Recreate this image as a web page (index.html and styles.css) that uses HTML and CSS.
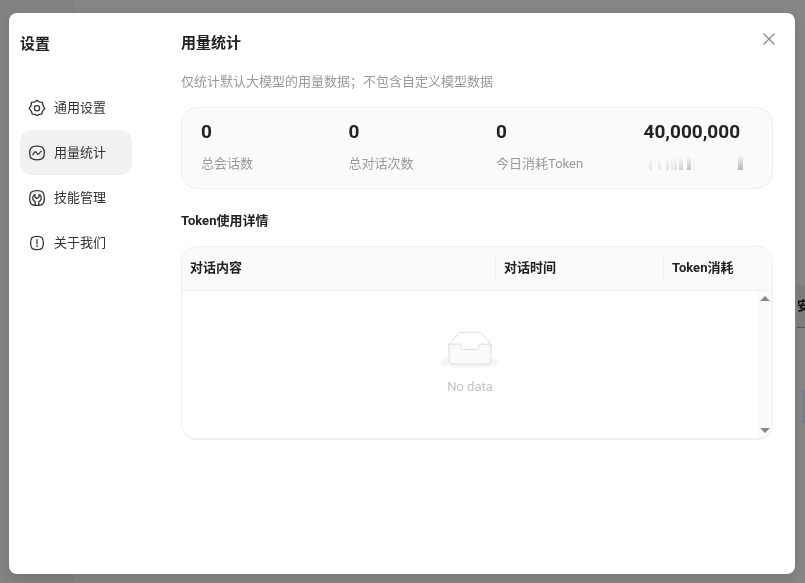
FILE: index.html
```html
<!DOCTYPE html>
<html lang="zh-CN">
<head>
<meta charset="utf-8">
<meta name="viewport" content="width=device-width, initial-scale=1">
<title>设置</title>
<link rel="stylesheet" href="styles.css">
</head>
<body>
<div class="backdrop" aria-hidden="true">
  <span class="backdrop-rail"></span>
  <span class="backdrop-panel">安</span>
  <span class="backdrop-accent"></span>
</div>
<div class="dialog" role="dialog" aria-labelledby="dialog-title">
  <aside class="sidebar">
    <h1 class="dialog-title" id="dialog-title">设置</h1>
    <nav class="menu">
      <a class="menu-item" href="#general">
        <svg class="icon" viewBox="0 0 18 18"><path d="M9 1.2 11.1 2.9 14.5 3.3 15 6.7 16.8 9.6 14.6 12.1 13.7 15.2 10.7 15.4 9 16.7 7.3 15.4 4.3 15.2 3.4 12.1 1.2 9.6 3 6.7 3.5 3.3 6.9 2.9Z"/><circle cx="9" cy="9.2" r="2.6"/></svg>
        通用设置
      </a>
      <a class="menu-item active" href="#usage" aria-current="page">
        <svg class="icon" viewBox="0 0 18 18"><path d="M9 2.2C14.6 2.2 16.3 3.8 16.3 9S14.6 15.8 9 15.8 1.7 14.2 1.7 9 3.4 2.2 9 2.2Z"/><path d="M4.8 10.6 6.6 8.1Q7.3 7.2 8 8.1L9.3 9.9Q10 10.8 10.7 9.9L13.2 7.1"/></svg>
        用量统计
      </a>
      <a class="menu-item" href="#skills">
        <svg class="icon" viewBox="0 0 18 18"><path d="M7.2 16.4C3 16.1 1.7 14.3 1.7 9 1.7 3.3 3.3 1.7 9 1.7S16.3 3.3 16.3 9C16.3 14.3 15 16.1 10.8 16.4"/><path d="M7.2 16.3V12.6C4.9 11.5 4.2 9 5.1 7.2 5.5 6.3 6.2 5.8 7 5.6V8L9 9.4 11 8V5.6C11.8 5.8 12.5 6.3 12.9 7.2 13.8 9 13.1 11.5 10.8 12.6V16.3Z"/></svg>
        技能管理
      </a>
      <a class="menu-item" href="#about">
        <svg class="icon" viewBox="0 0 18 18"><path d="M9 2.4C13.9 2.4 15.4 4 15.4 9S13.9 15.6 9 15.6 2.6 14 2.6 9 4.1 2.4 9 2.4Z"/><path d="M9 5.6V9.8M9 11.4V12.6"/></svg>
        关于我们
      </a>
    </nav>
  </aside>
  <main class="content">
    <header class="content-header">
      <h2 class="content-title">用量统计</h2>
      <button class="close" type="button" aria-label="关闭"><svg class="close-icon" viewBox="0 0 14 14"><path d="M1.5 1.5 12.5 12.5M12.5 1.5 1.5 12.5"/></svg></button>
    </header>
    <p class="hint">仅统计默认大模型的用量数据；不包含自定义模型数据</p>
    <dl class="stats">
      <div class="stat"><dd class="stat-value">0</dd><dt class="stat-label">总会话数</dt></div>
      <div class="stat"><dd class="stat-value">0</dd><dt class="stat-label">总对话次数</dt></div>
      <div class="stat"><dd class="stat-value">0</dd><dt class="stat-label">今日消耗Token</dt></div>
      <div class="stat"><dd class="stat-value">40,000,000</dd><dt class="stat-label">
        <svg class="smudge" viewBox="0 0 100 20" aria-hidden="true">
          <defs><linearGradient id="fade" x1="0" y1="0" x2="0" y2="1"><stop offset="0" stop-color="#888" stop-opacity="0"/><stop offset="1" stop-color="#888"/></linearGradient></defs>
          <g fill="url(#fade)">
            <rect x="5" y="3" width="3" height="13" opacity=".2"/><rect x="14" y="3" width="3" height="13" opacity=".15"/>
            <rect x="22" y="3" width="3" height="13" opacity=".2"/><rect x="27" y="3" width="2" height="13" opacity=".2"/><rect x="30" y="3" width="3" height="13" opacity=".25"/>
            <rect x="35" y="2" width="4" height="14" opacity=".35"/><rect x="43" y="2" width="4" height="14" opacity=".5"/><rect x="49" y="3" width="2" height="13" opacity=".1"/>
            <rect x="94" y="1" width="5" height="15" opacity=".6"/>
          </g>
        </svg></dt></div>
    </dl>
    <h3 class="section-title">Token使用详情</h3>
    <div class="table-card">
      <table class="usage">
        <thead>
          <tr><th class="col-content"><span class="cell">对话内容</span></th><th class="col-time"><span class="cell">对话时间</span></th><th class="col-token"><span class="cell">Token消耗</span></th></tr>
        </thead>
        <tbody>
          <tr><td colspan="3">
            <div class="table-body">
              <div class="empty">
                <svg class="empty-image" viewBox="0 0 64 41"><g transform="translate(0 1)" fill="none" fill-rule="evenodd"><ellipse fill="#f5f5f5" cx="32" cy="33" rx="32" ry="7"/><g fill-rule="nonzero" stroke="#d9d9d9"><path d="M55 12.76L44.854 1.258C44.367.474 43.656 0 42.907 0H21.093c-.749 0-1.46.474-1.947 1.257L9 12.761V22h46v-9.24z"/><path d="M41.613 15.931c0-1.605.994-2.93 2.227-2.931H55v18.137C55 33.26 53.68 35 52.05 35h-40.1C10.32 35 9 33.259 9 31.137V13h11.16c1.233 0 2.227 1.323 2.227 2.928v.022c0 1.605 1.005 2.901 2.237 2.901h14.752c1.232 0 2.237-1.308 2.237-2.913v-.007z" fill="#fafafa"/></g></g></svg>
                <p class="empty-text">No data</p>
              </div>
              <div class="scroll-track" aria-hidden="true"><span class="arrow-up"></span><span class="arrow-down"></span></div>
            </div>
          </td></tr>
        </tbody>
      </table>
    </div>
  </main>
</div>
</body>
</html>
```
FILE: styles.css
```css
* { box-sizing: border-box; }

body {
  margin: 0;
  min-height: 100vh;
  display: flex;
  padding: 13px 10px 9px 9px;
  background: #868686;
  color: #222;
  font: 13px/20px Roboto, "Noto Sans CJK SC", sans-serif;
}

h1, h2, h3, p, dl, dd { margin: 0; }

.backdrop { position: fixed; inset: 0; overflow: hidden; }

.backdrop-rail {
  position: absolute;
  inset: 0 auto 0 0;
  width: 74px;
  background: #838383;
  border-right: 1px solid #808080;
}

.backdrop-panel {
  position: absolute;
  top: 285px;
  right: 0;
  width: 8px;
  height: 43px;
  padding-top: 11px;
  border-bottom: 1px solid #555;
  background: #7e7e7e;
  color: #111;
  font-weight: 700;
}

.backdrop-accent {
  position: absolute;
  top: 389px;
  right: 0;
  width: 2px;
  height: 34px;
  background: #77779a;
}

.dialog {
  position: relative;
  flex: 1;
  display: flex;
  gap: 49px;
  padding: 16px 22px 16px 11px;
  border-radius: 8px;
  background: #fff;
  box-shadow: 0 4px 12px rgba(0, 0, 0, .12);
}

.sidebar { flex: 0 0 112px; }

.dialog-title {
  margin-bottom: 29px;
  padding-top: 3px;
  font-size: 15px;
  line-height: 24px;
}

.menu { display: flex; flex-direction: column; }

.menu-item {
  display: flex;
  align-items: center;
  gap: 8px;
  height: 45px;
  padding: 0 8px;
  border-radius: 12px;
  color: #333;
  text-decoration: none;
}

.menu-item.active { background: #f1f1f1; }

.icon {
  width: 18px;
  height: 18px;
  fill: none;
  stroke: #333;
  stroke-width: 1.3;
  stroke-linecap: round;
  stroke-linejoin: round;
}

.content { flex: 1; min-width: 0; }

.content-header {
  display: flex;
  justify-content: space-between;
  align-items: flex-start;
  height: 43px;
}

.content-title { font-size: 15px; line-height: 28px; }

.close {
  display: flex;
  padding: 3px;
  margin-right: -6px;
  border: 0;
  background: none;
}

.close-icon {
  width: 14px;
  height: 14px;
  fill: none;
  stroke: #888;
  stroke-width: 1.3;
}

.hint { color: #999; }

.stats {
  display: grid;
  grid-template-columns: repeat(4, 1fr);
  margin-top: 15px;
  height: 82px;
  padding-top: 12px;
  border: 1px solid #eee;
  border-radius: 16px;
  background: #fafafa;
}

.stat { min-width: 0; padding-left: 19px; }

.stat-value {
  font-size: 19px;
  line-height: 24px;
  font-weight: 700;
}

.stat-label { margin-top: 10px; color: #999; }

.smudge { display: block; width: 100px; height: 20px; }

.section-title {
  margin: 22px 0 15px;
  font-size: 13px;
  line-height: 20px;
}

.table-card {
  border: 1px solid #f0f0f0;
  border-bottom-width: 2px;
  border-radius: 16px;
  overflow: hidden;
}

.usage { width: 100%; border-collapse: collapse; table-layout: fixed; }

.usage th {
  height: 43px;
  padding: 0;
  border-bottom: 1px solid #f0f0f0;
  background: #fafafa;
  text-align: left;
}

.usage td { padding: 0; }

.col-time { width: 168px; }
.col-token { width: 108px; }

.cell { display: block; padding: 0 8px; line-height: 22px; }

th:not(:last-child) .cell { border-right: 1px solid #f0f0f0; }

.table-body { display: flex; height: 147px; }

.empty {
  flex: 1;
  display: flex;
  flex-direction: column;
  align-items: center;
  justify-content: center;
}

.empty-image { width: 58px; height: 38px; }

.empty-text { margin-top: 8px; color: #c4c4c4; }

.scroll-track {
  display: flex;
  flex-direction: column;
  align-items: center;
  justify-content: space-between;
  width: 14px;
  padding: 5px 0;
  background: #fafafa;
}

.arrow-up,
.arrow-down {
  border: 5px solid transparent;
  border-top-width: 0;
  border-bottom: 5px solid #888;
}

.arrow-down { border-top: 5px solid #888; border-bottom-width: 0; }
```
